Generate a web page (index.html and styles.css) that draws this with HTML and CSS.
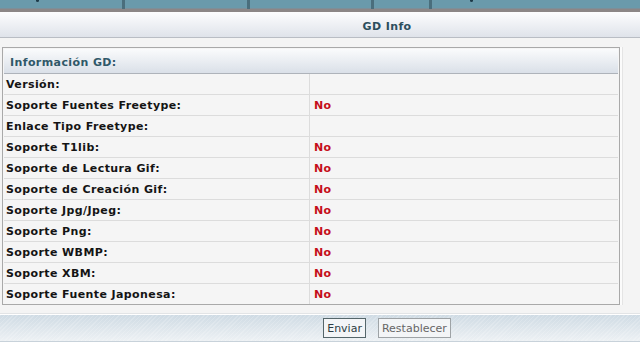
FILE: index.html
```html
<!DOCTYPE html>
<html lang="es">
<head>
<meta charset="utf-8">
<title>GD Info</title>
<link rel="stylesheet" href="styles.css">
</head>
<body>
<div class="tabs">
  <div class="tab tab-a"><span class="cut"></span></div>
  <div class="tab tab-b"></div>
  <div class="tab tab-c"></div>
  <div class="tab tab-d"></div>
  <div class="tab tab-e"><span class="cut"></span></div>
</div>
<div class="title-bar"><h1 class="title">GD Info</h1></div>
<div class="content">
  <div class="panel">
    <table class="info">
      <thead>
        <tr><th colspan="2">Información GD:</th></tr>
      </thead>
      <tbody>
        <tr><td class="label">Versión:</td><td class="value"></td></tr>
        <tr><td class="label">Soporte Fuentes Freetype:</td><td class="value">No</td></tr>
        <tr><td class="label">Enlace Tipo Freetype:</td><td class="value"></td></tr>
        <tr><td class="label">Soporte T1lib:</td><td class="value">No</td></tr>
        <tr><td class="label">Soporte de Lectura Gif:</td><td class="value">No</td></tr>
        <tr><td class="label">Soporte de Creación Gif:</td><td class="value">No</td></tr>
        <tr><td class="label">Soporte Jpg/Jpeg:</td><td class="value">No</td></tr>
        <tr><td class="label">Soporte Png:</td><td class="value">No</td></tr>
        <tr><td class="label">Soporte WBMP:</td><td class="value">No</td></tr>
        <tr><td class="label">Soporte XBM:</td><td class="value">No</td></tr>
        <tr><td class="label">Soporte Fuente Japonesa:</td><td class="value">No</td></tr>
      </tbody>
    </table>
  </div>
  <div class="rule"></div>
</div>
<div class="actions">
  <button class="btn btn-primary" type="submit">Enviar</button>
  <button class="btn btn-reset" type="reset">Restablecer</button>
</div>
</body>
</html>
```

FILE: styles.css
```css
html, body {
  margin: 0;
  padding: 0;
}
body {
  background: #ffffff;
  font-family: "DejaVu Sans", Verdana, sans-serif;
  font-size: 11px;
  color: #111;
}
.tabs {
  display: flex;
  height: 9px;
  background: #6a9aab;
  border-bottom: 3px solid #8c8686;
  box-shadow: inset 0 -1px 0 #7d8f99;
  overflow: hidden;
}
.tab {
  height: 9px;
  border-right: 1px solid #4a6e7c;
  box-shadow: 2px 0 0 #4a6e7c;
  position: relative;
}
.tab-a { width: 122px; }
.tab-b { width: 124px; }
.tab-c { width: 123px; }
.tab-d { width: 57px; }
.tab-e { flex: 1; border-right: 0; box-shadow: none; }
.cut {
  position: absolute;
  top: 0;
  width: 3px;
  height: 2px;
  border-radius: 0 0 2px 2px;
  background: #1d3a48;
}
.tab-a .cut { left: 36px; }
.tab-e .cut { left: 40px; }
.title-bar {
  height: 21px;
  padding-top: 4px;
  background: linear-gradient(#fdfdfe, #dfe3ea);
  border-bottom: 1px solid #b9bdc4;
  padding-left: 134px;
  display: flex;
  align-items: center;
  justify-content: center;
}
.title {
  margin: 0;
  font-size: 11px;
  line-height: 13px;
  font-weight: bold;
  letter-spacing: 0.4px;
  color: #2c4e5d;
}
.content {
  background: #f4f4f4;
  padding: 9px 0 0 2px;
}
.panel {
  width: 614px;
  border: 1px solid #a9a9a9;
  padding: 1px 1px 0 1px;
  background: #f5f5f5;
  box-shadow: 2px 0 0 #fbfbfb, 3px 0 0 #e4e4e4;
}
.info {
  width: 100%;
  border-collapse: collapse;
}
.info th {
  height: 21px;
  line-height: 21px;
  padding: 3px 0 0 6px;
  vertical-align: top;
  text-align: left;
  font-weight: bold;
  letter-spacing: 0.4px;
  color: #2f5868;
  background: linear-gradient(#fafbfc, #dae0e8);
  border-bottom: 1px solid #aeb3ba;
}
.info td {
  height: 18px;
  line-height: 18px;
  padding: 2px 0 0 2px;
  vertical-align: top;
  border-bottom: 1px solid #dcdcdc;
  font-weight: bold;
  letter-spacing: 0.4px;
}
.info tr:last-child td {
  border-bottom: 0;
}
.info .label {
  width: 303px;
  color: #141414;
  border-right: 1px solid #dcdcdc;
}
.info .value {
  padding-left: 4px;
  color: #c50f1a;
}
.rule {
  height: 8px;
  border-bottom: 1px solid #e2e4e6;
  margin-left: -2px;
}
.actions {
  height: 26px;
  margin-top: 1px;
  border-bottom: 1px solid #c8d2da;
  background:
    repeating-linear-gradient(135deg, rgba(255,255,255,0.18) 0 1px, rgba(255,255,255,0) 1px 3px),
    linear-gradient(#cfdbe4, #edf1f4);
  padding-left: 134px;
  display: flex;
  align-items: center;
  justify-content: center;
  gap: 12px;
}
.btn {
  font-family: "DejaVu Sans", Verdana, sans-serif;
  font-size: 11px;
  height: 20px;
  padding: 0 3px;
  background: #f3f5f7;
  margin: 0;
}
.btn-primary {
  border: 1px solid #55666a;
  color: #2d3d44;
}
.btn-reset {
  border: 1px solid #9ea3a6;
  color: #666;
}
```
